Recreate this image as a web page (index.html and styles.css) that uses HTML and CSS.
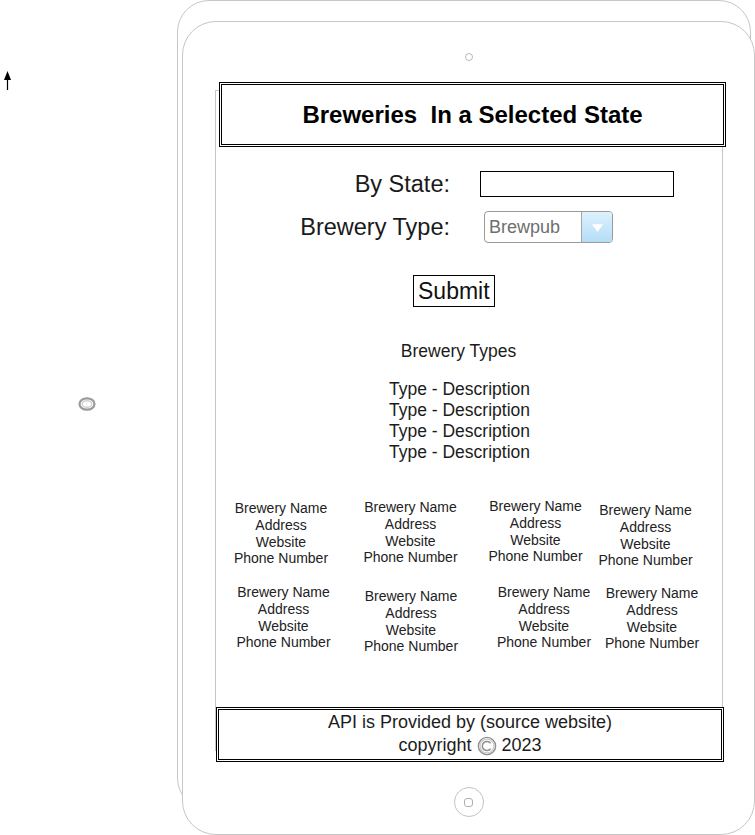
FILE: index.html
```html
<!DOCTYPE html>
<html lang="en">
<head>
<meta charset="utf-8">
<title>Breweries In a Selected State</title>
<link rel="stylesheet" href="styles.css">
</head>
<body>
  <svg class="arrow" viewBox="0 0 11 21" aria-hidden="true">
    <line x1="5.5" y1="8" x2="5.5" y2="20" stroke="#000" stroke-width="1.2"/>
    <polygon points="5.5,1 2,10 9,10" fill="#000"/>
  </svg>
  <svg class="bubble" viewBox="0 0 18 14" aria-hidden="true">
    <ellipse cx="9" cy="7" rx="7.5" ry="5.7" fill="none" stroke="#9a9a9a" stroke-width="2.2"/>
    <ellipse cx="9" cy="7" rx="4.8" ry="3.3" fill="none" stroke="#d0d0d0" stroke-width="1.4"/>
  </svg>

  <div class="tablet-back"></div>
  <div class="tablet">
    <div class="camera"></div>
    <div class="screen">
      <header class="title-box"><h1 class="title">Breweries  In a Selected State</h1></header>

      <form class="filters">
        <label class="field-label">By State:</label>
        <div class="text-input"></div>
        <label class="field-label">Brewery Type:</label>
        <div class="select">
          <span class="select-value">Brewpub</span>
          <span class="select-arrow">
            <svg viewBox="0 0 14 10" aria-hidden="true"><polygon points="1,1 13,1 7,9" fill="#fff"/></svg>
          </span>
        </div>
      </form>

      <div class="submit-row"><span class="submit">Submit</span></div>

      <h2 class="types-title">Brewery Types</h2>
      <ul class="types">
        <li>Type - Description</li>
        <li>Type - Description</li>
        <li>Type - Description</li>
        <li>Type - Description</li>
      </ul>

      <div class="breweries">
        <div class="brewery b1"><span>Brewery Name</span><span>Address</span><span>Website</span><span>Phone Number</span></div>
        <div class="brewery b2"><span>Brewery Name</span><span>Address</span><span>Website</span><span>Phone Number</span></div>
        <div class="brewery b3"><span>Brewery Name</span><span>Address</span><span>Website</span><span>Phone Number</span></div>
        <div class="brewery b4"><span>Brewery Name</span><span>Address</span><span>Website</span><span>Phone Number</span></div>
        <div class="brewery b5"><span>Brewery Name</span><span>Address</span><span>Website</span><span>Phone Number</span></div>
        <div class="brewery b6"><span>Brewery Name</span><span>Address</span><span>Website</span><span>Phone Number</span></div>
        <div class="brewery b7"><span>Brewery Name</span><span>Address</span><span>Website</span><span>Phone Number</span></div>
        <div class="brewery b8"><span>Brewery Name</span><span>Address</span><span>Website</span><span>Phone Number</span></div>
      </div>

      <footer class="footer-box">
        <div>API is Provided by (source website)</div>
        <div>copyright <svg class="copy-icon" viewBox="0 0 20 20" aria-hidden="true">
          <circle cx="10" cy="10" r="8.6" fill="none" stroke="#8f8f8f" stroke-width="1.4"/>
          <circle cx="10" cy="10" r="6.9" fill="none" stroke="#c9c9c9" stroke-width="1.2"/>
          <path d="M13.6 7.2 A4.6 4.6 0 1 0 13.6 12.8" fill="none" stroke="#8f8f8f" stroke-width="1.5"/>
        </svg> 2023</div>
      </footer>
    </div>
    <div class="home"><span class="home-key"></span></div>
  </div>
</body>
</html>
```

FILE: styles.css
```css
html, body {
  margin: 0;
  padding: 0;
}

body {
  width: 755px;
  height: 835px;
  position: relative;
  overflow: hidden;
  background: #fff;
  font-family: "Liberation Sans", Arial, sans-serif;
  color: #1c1c1c;
}

.arrow {
  position: absolute;
  left: 2px;
  top: 70px;
  width: 11px;
  height: 21px;
}

.bubble {
  position: absolute;
  left: 78px;
  top: 397px;
  width: 18px;
  height: 14px;
}

.tablet-back {
  position: absolute;
  left: 177px;
  top: 0;
  width: 574px;
  height: 810px;
  box-sizing: border-box;
  border: 1px solid #c6c6c6;
  border-radius: 32px;
}

.tablet {
  position: absolute;
  left: 182px;
  top: 21px;
  width: 573px;
  height: 814px;
  box-sizing: border-box;
  border: 1px solid #c6c6c6;
  border-radius: 34px;
  background: #fff;
  display: flex;
  flex-direction: column;
  align-items: center;
}

.camera {
  margin-top: 31px;
  width: 8px;
  height: 8px;
  box-sizing: border-box;
  border: 1px solid #b8b8b8;
  border-radius: 50%;
}

.screen {
  align-self: flex-start;
  margin-top: 29px;
  margin-left: 32px;
  width: 508px;
  height: 661px;
  box-sizing: border-box;
  border: 1px solid #c6c6c6;
  display: flex;
  flex-direction: column;
}

.title-box {
  margin-top: -9px;
  margin-left: 3px;
  width: 507px;
  height: 65px;
  flex: none;
  box-sizing: border-box;
  border: 3px double #000;
  background: #fff;
  display: flex;
  align-items: center;
  justify-content: center;
}

.title {
  margin: 0;
  font-size: 24px;
  font-weight: bold;
  color: #000;
  white-space: pre;
}

.filters {
  margin: 24px 0 0 0;
  display: grid;
  grid-template-columns: 234px auto;
  column-gap: 30px;
  row-gap: 14px;
  align-items: center;
  justify-items: start;
}

.field-label {
  justify-self: end;
  font-size: 23.5px;
  line-height: 26px;
  color: #1a1a1a;
}

.text-input {
  width: 194px;
  height: 26px;
  box-sizing: border-box;
  border: 1px solid #000;
}

.select {
  margin-left: 4px;
  width: 129px;
  height: 32px;
  box-sizing: border-box;
  border: 1px solid #9a9a9a;
  border-radius: 4px;
  display: flex;
  overflow: hidden;
}

.select-value {
  flex: 1;
  padding-left: 4px;
  font-size: 18px;
  line-height: 30px;
  color: #6e6e6e;
}

.select-arrow {
  width: 30px;
  border-left: 1px solid #a6a6a6;
  background: linear-gradient(#def1fd, #b4ddf7);
  display: flex;
  align-items: center;
  justify-content: center;
}

.select-arrow svg {
  width: 13px;
  height: 10px;
  margin-top: 1px;
}

.submit-row {
  margin-top: 32px;
  padding-left: 197px;
  display: flex;
}

.submit {
  height: 32px;
  box-sizing: border-box;
  border: 1px solid #000;
  padding: 0 4px;
  font-size: 23px;
  line-height: 30px;
  color: #111;
}

.types-title {
  margin: 34px 0 0 0;
  padding-right: 21px;
  text-align: center;
  font-size: 17.5px;
  line-height: 20px;
  font-weight: normal;
  color: #1c1c1c;
}

.types {
  list-style: none;
  margin: 18px 0 0 0;
  padding: 0 19px 0 0;
  text-align: center;
  font-size: 17.5px;
  line-height: 21px;
  color: #1c1c1c;
}

.breweries {
  margin-top: 35px;
  padding-left: 5px;
  display: grid;
  grid-template-columns: 120px 139px 120px 98px;
  grid-template-rows: 86px auto;
  align-items: start;
  font-size: 14px;
  line-height: 16.8px;
  color: #222;
}

.brewery {
  display: flex;
  flex-direction: column;
  align-items: center;
  white-space: nowrap;
}

.b1 { margin-top: 2px; }
.b2 { margin-top: 1px; }
.b3 { margin-right: 9px; }
.b4 { margin-top: 4px; margin-right: 7px; }
.b5 { margin-left: 5px; }
.b6 { margin-top: 4px; margin-left: 1px; }
.b7 { margin-left: 8px; }
.b8 { margin-top: 1px; margin-left: 6px; }

.footer-box {
  margin-top: auto;
  margin-bottom: -12px;
  width: 508px;
  height: 55px;
  flex: none;
  box-sizing: border-box;
  border: 3px double #000;
  padding-top: 1px;
  background: #fff;
  text-align: center;
  font-size: 18px;
  line-height: 23px;
  color: #1c1c1c;
}

.copy-icon {
  width: 20px;
  height: 20px;
  vertical-align: -5px;
}

.home {
  margin-top: 36px;
  width: 30px;
  height: 30px;
  box-sizing: border-box;
  border: 1px solid #c2c2c2;
  border-radius: 50%;
  display: flex;
  align-items: center;
  justify-content: center;
}

.home-key {
  width: 9px;
  height: 9px;
  box-sizing: border-box;
  border: 1px solid #b0b0b0;
  border-radius: 3px;
}
```
